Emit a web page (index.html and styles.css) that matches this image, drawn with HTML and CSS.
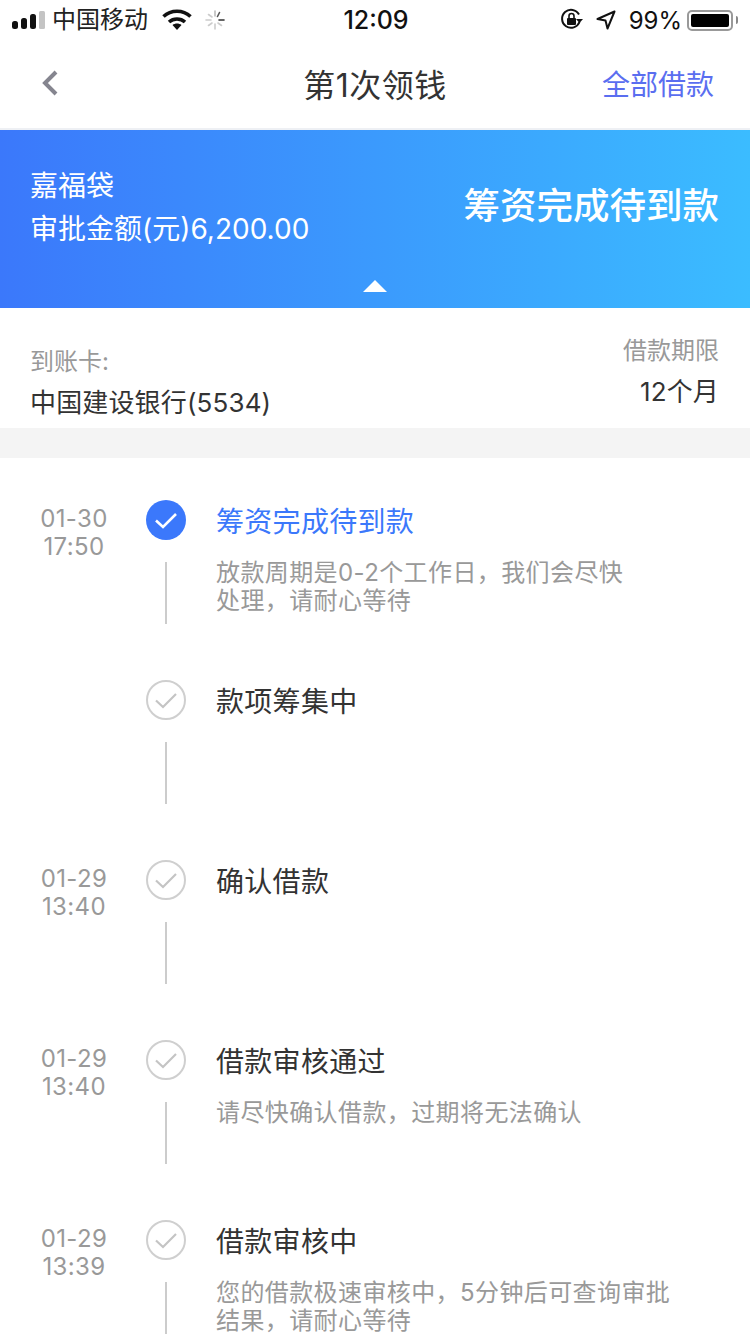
FILE: index.html
```html
<!DOCTYPE html>
<html lang="zh-CN">
  <head>
    <meta charset="UTF-8" />
    <meta name="viewport" content="width=device-width, initial-scale=1.0" />
    <title>第1次领钱</title>
    <link rel="stylesheet" href="styles.css">
  </head>
  <body>
    <!-- Status bar -->
    <div class="status-bar">
      <div class="status-left">
        <svg class="signal" width="33" height="20" viewBox="0 0 33 20">
          <rect x="0" y="11" width="6" height="8" rx="2.5" fill="#111" />
          <rect x="9" y="8" width="6" height="11" rx="2.5" fill="#111" />
          <rect x="18" y="4" width="6" height="15" rx="2.5" fill="#111" />
          <rect x="27" y="1" width="6" height="18" rx="1.5" fill="#c4c4c4" />
        </svg>
        <span class="carrier">中国移动</span>
        <svg class="wifi" width="30" height="22" viewBox="0 0 30 22">
          <path d="M1.5 7.5 C9 0.5 21 0.5 28.5 7.5" fill="none" stroke="#111" stroke-width="3.6" />
          <path d="M7 13 C11.5 9 18.5 9 23 13" fill="none" stroke="#111" stroke-width="3.6" />
          <path d="M10.5 16 L15 21 L19.5 16 C17 14 13 14 10.5 16 Z" fill="#111" />
        </svg>
        <svg class="spinner" width="22" height="22" viewBox="0 0 22 22" stroke-width="1.6" stroke-linecap="round">
          <path d="M11 2 V7" stroke="#bbb" />
          <path d="M15.5 3.5 L13.5 7.5" stroke="#555" />
          <path d="M20 11 H15" stroke="#333" />
          <path d="M17.5 16.5 L14 14" stroke="#ccc" />
          <path d="M11 20 V15" stroke="#ccc" />
          <path d="M4.5 16.5 L8 14" stroke="#ccc" />
          <path d="M2 11 H7" stroke="#ccc" />
          <path d="M4.5 5.5 L8 8" stroke="#ccc" />
        </svg>
      </div>
      <span class="clock">12:09</span>
      <div class="status-right">
        <svg class="lock" width="24" height="24" viewBox="0 0 24 24">
          <path d="M19.5 14 A9 9 0 1 1 19 6.5" fill="none" stroke="#111" stroke-width="2" />
          <path d="M23 11 L16 11 L19.5 15 Z" fill="#111" />
          <rect x="7" y="10" width="9" height="7" rx="1" fill="#111" />
          <path d="M9 10 V8 A2.5 2.5 0 0 1 14 8 V10" fill="none" stroke="#111" stroke-width="1.6" />
        </svg>
        <svg class="location" width="20" height="20" viewBox="0 0 20 20">
          <path d="M18.5 1.5 L1.5 9 L9.5 10.5 L11.5 18.5 Z" fill="none" stroke="#111" stroke-width="2" stroke-linejoin="round" />
        </svg>
        <span class="battery-text">99%</span>
        <div class="battery">
          <div class="battery-fill"></div>
        </div>
        <div class="battery-cap"></div>
      </div>
    </div>

    <!-- Nav -->
    <header class="nav">
      <svg class="back" width="18" height="26" viewBox="0 0 18 26">
        <path d="M15 2 L4 13 L15 24" fill="none" stroke="#85858f" stroke-width="4" />
      </svg>
      <h1 class="nav-title">第1次领钱</h1>
      <a class="nav-link">全部借款</a>
    </header>

    <!-- Banner -->
    <section class="banner">
      <div class="banner-left">
        <div class="product">嘉福袋</div>
        <div class="amount">审批金额(元)6,200.00</div>
      </div>
      <div class="banner-status">筹资完成待到款</div>
      <div class="arrow-up"></div>
    </section>

    <!-- Card info -->
    <section class="info">
      <div class="info-left">
        <div class="info-label">到账卡:</div>
        <div class="info-value">中国建设银行(5534)</div>
      </div>
      <div class="info-right">
        <div class="info-label">借款期限</div>
        <div class="info-value">12个月</div>
      </div>
    </section>

    <div class="divider"></div>

    <!-- Timeline -->
    <main class="timeline">
      <div class="step step-active">
        <div class="step-time">01-30<br />17:50</div>
        <div class="step-mark">
          <svg class="step-icon" width="40" height="40" viewBox="0 0 40 40">
            <circle cx="20" cy="20" r="20" fill="#3b78fb" />
            <path d="M10 20.5 L17 27 L30 14" fill="none" stroke="#fff" stroke-width="2.6" />
          </svg>
          <div class="step-line"></div>
        </div>
        <div class="step-body">
          <div class="step-title">筹资完成待到款</div>
          <div class="step-desc">放款周期是0-2个工作日，我们会尽快<br />处理，请耐心等待</div>
        </div>
      </div>

      <div class="step">
        <div class="step-time"></div>
        <div class="step-mark">
          <svg class="step-icon" width="40" height="40" viewBox="0 0 40 40">
            <circle cx="20" cy="20" r="19" fill="none" stroke="#cfcfcf" stroke-width="2" />
            <path d="M10 20.5 L17 27 L30 14" fill="none" stroke="#c4c4c4" stroke-width="2.2" />
          </svg>
          <div class="step-line"></div>
        </div>
        <div class="step-body">
          <div class="step-title">款项筹集中</div>
        </div>
      </div>

      <div class="step">
        <div class="step-time">01-29<br />13:40</div>
        <div class="step-mark">
          <svg class="step-icon" width="40" height="40" viewBox="0 0 40 40">
            <circle cx="20" cy="20" r="19" fill="none" stroke="#cfcfcf" stroke-width="2" />
            <path d="M10 20.5 L17 27 L30 14" fill="none" stroke="#c4c4c4" stroke-width="2.2" />
          </svg>
          <div class="step-line"></div>
        </div>
        <div class="step-body">
          <div class="step-title">确认借款</div>
        </div>
      </div>

      <div class="step">
        <div class="step-time">01-29<br />13:40</div>
        <div class="step-mark">
          <svg class="step-icon" width="40" height="40" viewBox="0 0 40 40">
            <circle cx="20" cy="20" r="19" fill="none" stroke="#cfcfcf" stroke-width="2" />
            <path d="M10 20.5 L17 27 L30 14" fill="none" stroke="#c4c4c4" stroke-width="2.2" />
          </svg>
          <div class="step-line"></div>
        </div>
        <div class="step-body">
          <div class="step-title">借款审核通过</div>
          <div class="step-desc">请尽快确认借款，过期将无法确认</div>
        </div>
      </div>

      <div class="step">
        <div class="step-time">01-29<br />13:39</div>
        <div class="step-mark">
          <svg class="step-icon" width="40" height="40" viewBox="0 0 40 40">
            <circle cx="20" cy="20" r="19" fill="none" stroke="#cfcfcf" stroke-width="2" />
            <path d="M10 20.5 L17 27 L30 14" fill="none" stroke="#c4c4c4" stroke-width="2.2" />
          </svg>
          <div class="step-line"></div>
        </div>
        <div class="step-body">
          <div class="step-title">借款审核中</div>
          <div class="step-desc">您的借款极速审核中，5分钟后可查询审批<br />结果，请耐心等待</div>
        </div>
      </div>
    </main>
  </body>
</html>
```

FILE: styles.css
```css
html {
  height: 1334px;
  overflow: hidden;
}

body {
  margin: 0;
  background-color: #fff;
  color: #333;
  font-family: Inter, "Noto Sans CJK SC", sans-serif;
}

/* Status bar */
.status-bar {
  display: flex;
  justify-content: space-between;
  align-items: center;
  height: 40px;
  padding: 0 12px;
  color: #111;
  position: relative;
}

.status-left,
.status-right {
  display: flex;
  align-items: center;
}

.carrier {
  font-size: 24px;
  line-height: 30px;
  margin-left: 7px;
  color: #222;
}

.wifi {
  margin-left: 14px;
}

.spinner {
  margin-left: 12px;
}

.clock {
  position: absolute;
  left: 2px;
  right: 0;
  text-align: center;
  font-size: 25px;
  font-weight: 500;
}

.location {
  margin-left: 12px;
}

.battery-text {
  font-size: 24px;
  margin-left: 13px;
}

.battery {
  width: 38px;
  height: 13px;
  margin-left: 5px;
  padding: 2px;
  border: 2px solid #999;
  border-radius: 5px;
}

.battery-fill {
  width: 100%;
  height: 100%;
  background-color: #000;
  border-radius: 2px;
}

.battery-cap {
  width: 2px;
  height: 8px;
  margin-left: 3px;
  background-color: #888;
  border-radius: 0 2px 2px 0;
}

/* Nav */
.nav {
  display: flex;
  justify-content: space-between;
  align-items: center;
  height: 86px;
  padding: 0 36px 2px 41px;
  border-bottom: 2px solid #eef0f4;
  position: relative;
}

.nav-title {
  position: absolute;
  left: 0;
  right: 0;
  margin: 0;
  text-align: center;
  font-size: 32px;
  font-weight: normal;
  letter-spacing: 0.5px;
  color: #333;
}

.nav-link {
  font-size: 28px;
  color: #5a6ef0;
}

/* Banner */
.banner {
  display: flex;
  justify-content: space-between;
  align-items: center;
  height: 178px;
  padding: 0 31px 26px 30px;
  box-sizing: border-box;
  background: linear-gradient(90deg, #3b78fb, #3bbcff);
  color: #fff;
  position: relative;
}

.product {
  font-size: 28px;
  line-height: 40px;
  margin-top: 3px;
  margin-bottom: 3px;
}

.amount {
  font-size: 28px;
  line-height: 40px;
}

.banner-status {
  font-size: 36.5px;
  font-weight: 500;
  margin-bottom: 6px;
}

.arrow-up {
  position: absolute;
  left: 363px;
  bottom: 16px;
  border-left: 12px solid transparent;
  border-right: 12px solid transparent;
  border-bottom: 12px solid #fff;
}

/* Card info */
.info {
  display: flex;
  justify-content: space-between;
  align-items: flex-end;
  height: 120px;
  padding: 0 31px 7px 30px;
  box-sizing: border-box;
}

.info-label {
  font-size: 24px;
  line-height: 34px;
  color: #999;
  margin-bottom: 6px;
}

.info-value {
  font-size: 26px;
  line-height: 36px;
  letter-spacing: 0.15px;
  color: #333;
}

.info-right {
  text-align: right;
  padding-bottom: 11px;
}

.divider {
  height: 30px;
  background-color: #f4f4f4;
}

/* Timeline */
.timeline {
  padding-top: 42px;
}

.step {
  display: flex;
  height: 180px;
}

.step-time {
  width: 148px;
  box-sizing: border-box;
  padding-top: 5px;
  text-align: center;
  font-size: 24px;
  line-height: 28px;
  letter-spacing: 0.4px;
  color: #999;
}

.step-mark {
  width: 40px;
  margin-left: -2px;
  display: flex;
  flex-direction: column;
  align-items: center;
}

.step-icon {
  display: block;
}

.step-line {
  width: 2px;
  height: 62px;
  margin-top: 22px;
  background-color: #ccc;
}

.step-body {
  margin-left: 30px;
  padding-top: 2px;
}

.step-title {
  font-size: 28px;
  line-height: 40px;
  letter-spacing: 0.3px;
  color: #333;
}

.step-active .step-title {
  color: #3b78fb;
}

.step-desc {
  margin-top: 17px;
  font-size: 24px;
  line-height: 28px;
  letter-spacing: 0.4px;
  color: #999;
}
```
